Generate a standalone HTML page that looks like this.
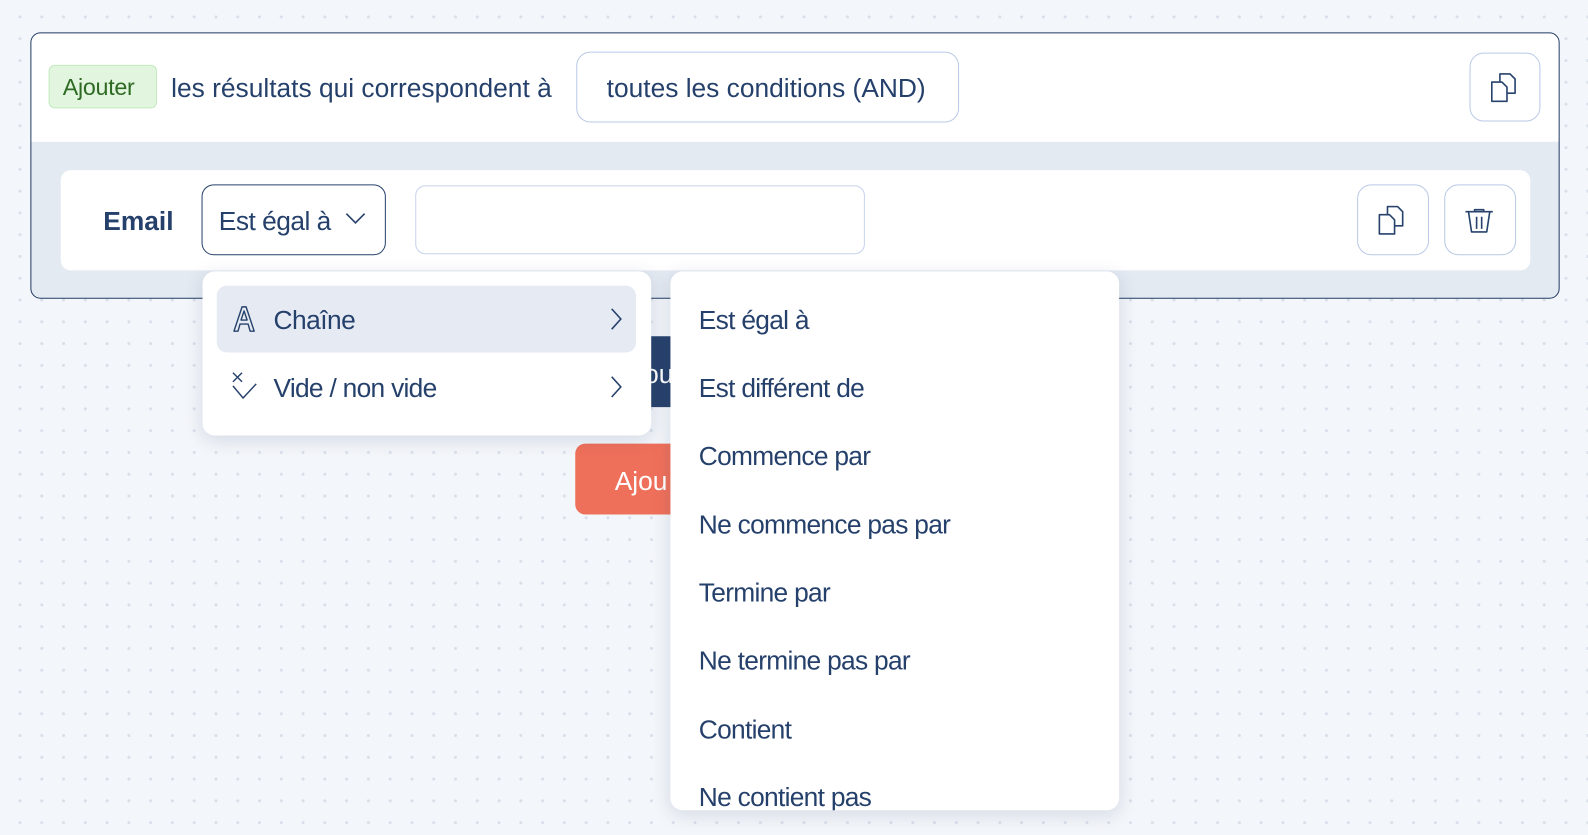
<!DOCTYPE html>
<html><head><meta charset="utf-8"><style>
*{box-sizing:border-box;margin:0;padding:0}
body{width:1588px;height:834px;overflow:hidden;background-color:#f3f6fa;font-family:"Liberation Sans",sans-serif;color:#25406b;position:relative}
#w{position:absolute;left:0;top:0;width:1568px;height:824px;transform:scale(1.01276);transform-origin:0 0;background-image:radial-gradient(circle,#d8dfea 1.3px,transparent 1.7px);background-size:21.5px 21.5px;background-position:9px 6px}
.a{position:absolute}
.t{font-size:26px;letter-spacing:0px;white-space:nowrap}
.m .t{letter-spacing:-0.7px}
.card{left:30px;top:32px;width:1510px;height:263px;border:1px solid #223a63;border-radius:10px;background:#e4eaf2;overflow:hidden}
.hdr{left:0;top:0;width:100%;height:107px;background:#fff}
.btn{border:1px solid #b9c9e6;border-radius:14px;background:#fff}
.menu{background:#fff;border-radius:12px;box-shadow:0 4px 18px rgba(40,60,100,.15)}
svg{position:absolute}
</style></head><body><div id="w">
<div class="a" style="left:568px;top:332px;width:120px;height:70px;background:#27426c;border-radius:10px"></div>
<div class="a t" style="left:636px;top:354px;color:#fff">ou</div>
<div class="a" style="left:568px;top:438px;width:120px;height:70px;background:#ef705a;border-radius:10px"></div>
<div class="a t" style="left:607px;top:460px;color:#fff">Ajou</div>

<div class="a card">
 <div class="a hdr"></div>
 <div class="a" style="left:29px;top:135px;width:1451px;height:99px;background:#fff;border-radius:10px"></div>
</div>
<div class="a" style="left:48px;top:64px;width:107px;height:43px;background:#e2f6df;border:1px solid #c3eabe;border-radius:6px"></div>
<div class="a t" style="left:62px;top:73px;color:#2f6a24;font-size:23px;letter-spacing:-0.3px">Ajouter</div>
<div class="a t" style="left:169px;top:72px">les résultats qui correspondent à</div>
<div class="a btn" style="left:569px;top:51px;width:378px;height:70px"></div>
<div class="a t" style="left:599px;top:72px">toutes les conditions (AND)</div>
<div class="a btn" style="left:1451px;top:52px;width:70px;height:68px"></div>
<svg style="left:1472px;top:72px" width="28" height="30" viewBox="0 0 28 30" fill="none" stroke="#27426c" stroke-width="1.6" stroke-linejoin="round"><path d="M1 9h10l5 5v14H1z"/><path d="M9 9V1h10l5 5v14h-8"/></svg>

<div class="a t" style="left:102px;top:203px;font-weight:bold;font-size:26px">Email</div>
<div class="a" style="left:199px;top:182px;width:182px;height:70px;border:1px solid #27426c;border-radius:12px;background:#fff"></div>
<div class="a t" style="left:216px;top:203px;letter-spacing:-0.5px">Est égal à</div>
<svg style="left:340px;top:208px" width="24" height="16" viewBox="0 0 24 16" fill="none" stroke="#27426c" stroke-width="1.6"><path d="M2 3l9 9 9-9"/></svg>
<div class="a" style="left:410px;top:183px;width:444px;height:68px;border:1px solid #c6d3ea;border-radius:10px;background:#fff"></div>
<div class="a btn" style="left:1340px;top:182px;width:71px;height:70px"></div>
<svg style="left:1361px;top:203px" width="28" height="30" viewBox="0 0 28 30" fill="none" stroke="#27426c" stroke-width="1.6" stroke-linejoin="round"><path d="M1 9h10l5 5v14H1z"/><path d="M9 9V1h10l5 5v14h-8"/></svg>
<div class="a btn" style="left:1426px;top:182px;width:71px;height:70px"></div>
<svg style="left:1446px;top:205px" width="30" height="26" viewBox="0 0 30 26" fill="none" stroke="#27426c" stroke-width="1.6" stroke-linejoin="round"><path d="M1 4h27"/><path d="M10 4V2h9v2"/><path d="M4 4l3 20h15l3-20"/><path d="M12 9v12M17 9v12"/></svg>

<div class="a menu m" style="left:200px;top:268px;width:443px;height:162px"></div>
<div class="a" style="left:214px;top:282px;width:414px;height:66px;background:#e5eaf3;border-radius:10px"></div>
<svg style="left:228px;top:301px" width="26" height="28" viewBox="0 0 26 28" fill="none" stroke="#27426c" stroke-width="1.4" stroke-linejoin="round"><path d="M3 26L11 2h4l8 24h-4l-2-7H9l-2 7z"/><path d="M10 15h6l-3-9z"/></svg>
<div class="a t" style="left:270px;top:301px;letter-spacing:-0.5px">Chaîne</div>
<svg style="left:600px;top:303px" width="16" height="24" viewBox="0 0 16 24" fill="none" stroke="#27426c" stroke-width="1.6"><path d="M4 2l9 10-9 10"/></svg>
<svg style="left:226px;top:366px" width="30" height="30" viewBox="0 0 30 30" fill="none" stroke="#27426c" stroke-width="1.4"><path d="M4 2l9 9M13 2l-9 9"/><path d="M4 15l10 12 13-14"/></svg>
<div class="a t" style="left:270px;top:368px;letter-spacing:-0.7px">Vide / non vide</div>
<svg style="left:600px;top:370px" width="16" height="24" viewBox="0 0 16 24" fill="none" stroke="#27426c" stroke-width="1.6"><path d="M4 2l9 10-9 10"/></svg>

<div class="a menu m" style="left:662px;top:268px;width:443px;height:532px;overflow:hidden">
 <div class="a t" style="left:28px;top:33px">Est égal à</div>
 <div class="a t" style="left:28px;top:100px">Est différent de</div>
 <div class="a t" style="left:28px;top:167px">Commence par</div>
 <div class="a t" style="left:28px;top:235px">Ne commence pas par</div>
 <div class="a t" style="left:28px;top:302px">Termine par</div>
 <div class="a t" style="left:28px;top:369px">Ne termine pas par</div>
 <div class="a t" style="left:28px;top:437px">Contient</div>
 <div class="a t" style="left:28px;top:504px">Ne contient pas</div>
</div>
</div></body></html>
